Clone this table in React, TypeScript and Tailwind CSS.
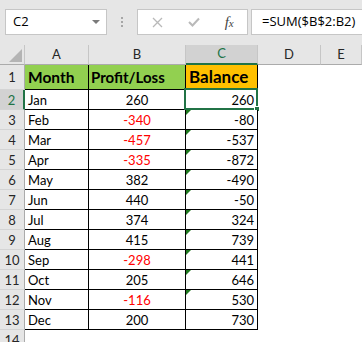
import React from 'react';

const rows: [string, number, number][] = [
  ['Jan', 260, 260],
  ['Feb', -340, -80],
  ['Mar', -457, -537],
  ['Apr', -335, -872],
  ['May', 382, -490],
  ['Jun', 440, -50],
  ['Jul', 374, 324],
  ['Aug', 415, 739],
  ['Sep', -298, 441],
  ['Oct', 205, 646],
  ['Nov', -116, 530],
  ['Dec', 200, 730],
];

const hdr = 'bg-[#e6e6e6] border-r border-b border-r-[#c6c6c6] border-b-[#ababab] flex items-center justify-center text-[13px] text-[#262626]';
const rowHdr = 'bg-[#e6e6e6] border-r border-b border-r-[#ababab] border-b-[#d4d4d4] flex items-end justify-center pb-[2px] leading-none text-[13px] text-[#262626]';
const cell = 'bg-white border-r border-b border-black flex items-end pb-[2px] leading-none text-[13px]';

const App = () => {
  return (
    <div className="w-[362px] h-[342px] overflow-hidden bg-[#e6e6e6] font-['Lato',sans-serif]">
      {/* ===== FORMULA BAR ===== */}
      <div className="h-[45px] flex pt-[9px] pl-[5px]">
        <div className="w-[102px] h-[26px] bg-white border border-[#c6c6c6] flex items-center justify-between pl-[7px] pr-[6px] font-['Open_Sans',sans-serif] text-[13px] text-black">
          <span>C2</span>
          <svg width="8" height="4" viewBox="0 0 8 4">
            <polygon points="0,0 8,0 4,4" fill="#7a7a7a" />
          </svg>
        </div>
        <div className="w-[30px] h-[26px] flex flex-col items-center justify-center gap-[2px]">
          <div className="w-[2px] h-[2px] bg-[#a6a6a6]" />
          <div className="w-[2px] h-[2px] bg-[#a6a6a6]" />
          <div className="w-[2px] h-[2px] bg-[#a6a6a6]" />
        </div>
        <div className="w-[111px] h-[26px] bg-white border border-[#c6c6c6] flex items-center pl-[2px]">
          <div className="w-[36px] flex justify-center">
            <svg width="11" height="11" viewBox="0 0 11 11">
              <path d="M1 1 L10 10 M10 1 L1 10" stroke="#b9b9b9" strokeWidth="1.3" />
            </svg>
          </div>
          <div className="w-[36px] flex justify-center">
            <svg width="12" height="10" viewBox="0 0 12 10">
              <path d="M1 5 L4.5 8.5 L11 1.5" stroke="#b9b9b9" strokeWidth="2" fill="none" />
            </svg>
          </div>
          <div className="w-[36px] flex justify-center font-['Liberation_Serif',serif] italic text-[15px] text-[#444] leading-none">
            f<span className="text-[11px] mt-[3px]">x</span>
          </div>
        </div>
        <div className="ml-[3px] flex-1 h-[26px] bg-white border border-r-0 border-[#c6c6c6] flex items-center pl-[10px] font-['Open_Sans',sans-serif] text-[13px] text-black">
          =SUM($B$2:B2)
        </div>
      </div>

      {/* ===== SHEET ===== */}
      <div className="grid grid-cols-[25px_64px_97px_72px_63px_1fr] grid-rows-[20px_25px_repeat(13,20px)]">
        {/* header row */}
        <div className={hdr + ' relative'}>
          <svg className="absolute right-[2px] bottom-[2px]" width="13" height="13" viewBox="0 0 13 13">
            <polygon points="13,0 13,13 0,13" fill="#b4b4b4" />
          </svg>
        </div>
        <div className={hdr}>A</div>
        <div className={hdr}>B</div>
        <div className="bg-[#d2d2d2] border-r border-r-[#c6c6c6] border-b-2 border-b-[#217346] flex items-center justify-center text-[13px] text-[#217346]">C</div>
        <div className={hdr}>D</div>
        <div className={hdr}>E</div>

        {/* row 1 */}
        <div className="bg-[#e6e6e6] border-r border-b border-r-[#ababab] border-b-[#d4d4d4] flex items-end justify-center pb-[5px] leading-none text-[13px] text-[#262626]">1</div>
        <div className="bg-[#92d050] border-r border-b border-black flex items-end pb-[4px] pl-[3px] leading-none text-[15.5px] font-bold">Month</div>
        <div className="bg-[#92d050] border-r border-b border-black flex items-end pb-[4px] pl-[2px] leading-none text-[15px] font-bold">Profit/Loss</div>
        <div className="bg-[#ffc000] border-r border-b border-black flex items-end pb-[4px] pl-[3px] leading-none text-[17px] font-bold">Balance</div>
        <div className="bg-white" />
        <div className="bg-white" />

        {/* data rows */}
        {rows.map(([m, p, b], i) => (
          <React.Fragment key={m}>
            {i === 0 ? (
              <div className="bg-[#d2d2d2] border-r-2 border-b border-r-[#217346] border-b-[#d4d4d4] flex items-end justify-center pb-[2px] leading-none text-[13px] text-[#217346]">2</div>
            ) : (
              <div className={rowHdr}>{i + 2}</div>
            )}
            <div className={cell + ' pl-[3px] text-black'}>{m}</div>
            <div className={cell + ' justify-center ' + (p < 0 ? 'text-[#ff0000]' : 'text-black')}>{p}</div>
            <div className={cell + ' justify-end pr-[3px] relative text-black'}>
              {i > 0 && i < 11 && (
                <div className="absolute left-0 top-0 w-0 h-0 border-t-[5px] border-t-[#1f7a1f] border-r-[5px] border-r-transparent" />
              )}
              {i === 0 && (
                <div className="absolute left-[-2px] top-[-2px] right-[-1px] bottom-[-1px] border-2 border-[#217346]">
                  <div className="absolute right-[-4px] bottom-[-4px] w-[6px] h-[6px] bg-[#217346] border border-white" />
                </div>
              )}
              {b}
            </div>
            <div className="bg-white" />
            <div className="bg-white" />
          </React.Fragment>
        ))}

        {/* row 14 */}
        <div className={rowHdr}>14</div>
        <div className="bg-white" />
        <div className="bg-white" />
        <div className="bg-white" />
        <div className="bg-white" />
        <div className="bg-white" />
      </div>
    </div>
  );
};

export default App;
